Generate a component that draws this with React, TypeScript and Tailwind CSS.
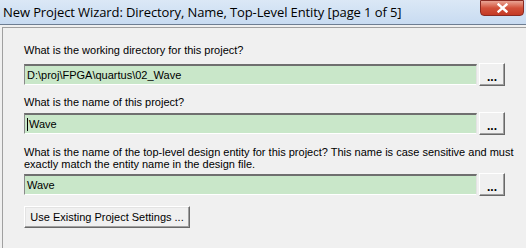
import React from 'react';

const body = { fontFamily: '"Liberation Sans", Arial, sans-serif' };

function Field({ value, caret }: { value: string; caret?: boolean }) {
  return (
    <div className="flex items-center gap-[2px]">
      <div className="w-[453px] h-[21px] flex items-center bg-[#c9e7c9] border-t-2 border-l border-t-[#6f6f6f] border-l-[#8a8a8a] border-b border-r border-b-white border-r-[#e3e3e3] pl-[2px] text-[11px] text-black">
        {caret && <span className="inline-block w-px h-[13px] bg-black mr-px" />}
        <span>{value}</span>
      </div>
      <button className="w-[26px] h-[23px] bg-[#f0f0f0] border border-t-white border-l-white border-b-[#696969] border-r-[#696969] shadow-[inset_-1px_-1px_0_#a0a0a0] text-[12px] leading-none font-bold pt-[4px] text-black">
        ...
      </button>
    </div>
  );
}

export default function App() {
  return (
    <div className="w-[526px] h-[248px] bg-[#f0f0f0] overflow-hidden relative" style={body}>
      {/* title bar */}
      <div className="h-[25px] bg-gradient-to-b from-[#dbe8f6] to-[#c8dbf1] border-b border-[#6d7d92] flex items-start">
        <span className="pl-[3px] pt-[3px] text-[13px] text-black whitespace-nowrap" style={{ fontFamily: '"Open Sans", "Noto Sans", sans-serif', letterSpacing: '-0.1px' }}>
          New Project Wizard: Directory, Name, Top-Level Entity [page 1 of 5]
        </span>
      </div>
      <div className="absolute right-[2px] top-0 w-[44px] h-[16px] rounded-b-[4px] border border-[#8a2a22] bg-gradient-to-b from-[#e8a394] via-[#d2503a] to-[#c43a25] flex items-center justify-center">
        <svg width="11" height="10" viewBox="0 0 11 10">
          <path d="M1.5 1.5 L9.5 8.5 M9.5 1.5 L1.5 8.5" stroke="#fff" strokeWidth="2.4" strokeLinecap="square" />
        </svg>
      </div>

      {/* frame */}
      <div className="ml-[2px] mt-[2px] border-l border-t border-[#a0a0a0] h-[230px] pl-[21px] text-[11px] text-black">
        <div className="pt-[16px] h-[13px] leading-[13px] box-content">What is the working directory for this project?</div>
        <div className="mt-[6px]">
          <Field value="D:\proj\FPGA\quartus\02_Wave" />
        </div>
        <div className="mt-[10px] leading-[13px]">What is the name of this project?</div>
        <div className="mt-[3px]">
          <Field value="Wave" caret />
        </div>
        <div className="mt-[11px] leading-[12px] whitespace-nowrap">
          What is the name of the top-level design entity for this project? This name is case sensitive and must
          <br />
          exactly match the entity name in the design file.
        </div>
        <div className="mt-[3px]">
          <Field value="Wave" />
        </div>
        <button className="mt-[10px] w-[166px] h-[22px] bg-[#f0f0f0] border border-t-white border-l-white border-b-[#696969] border-r-[#696969] shadow-[inset_-1px_-1px_0_#a0a0a0,inset_1px_1px_0_#e3e3e3] text-[11px] text-black whitespace-nowrap">
          Use Existing Project Settings ...
        </button>
      </div>
    </div>
  );
}
